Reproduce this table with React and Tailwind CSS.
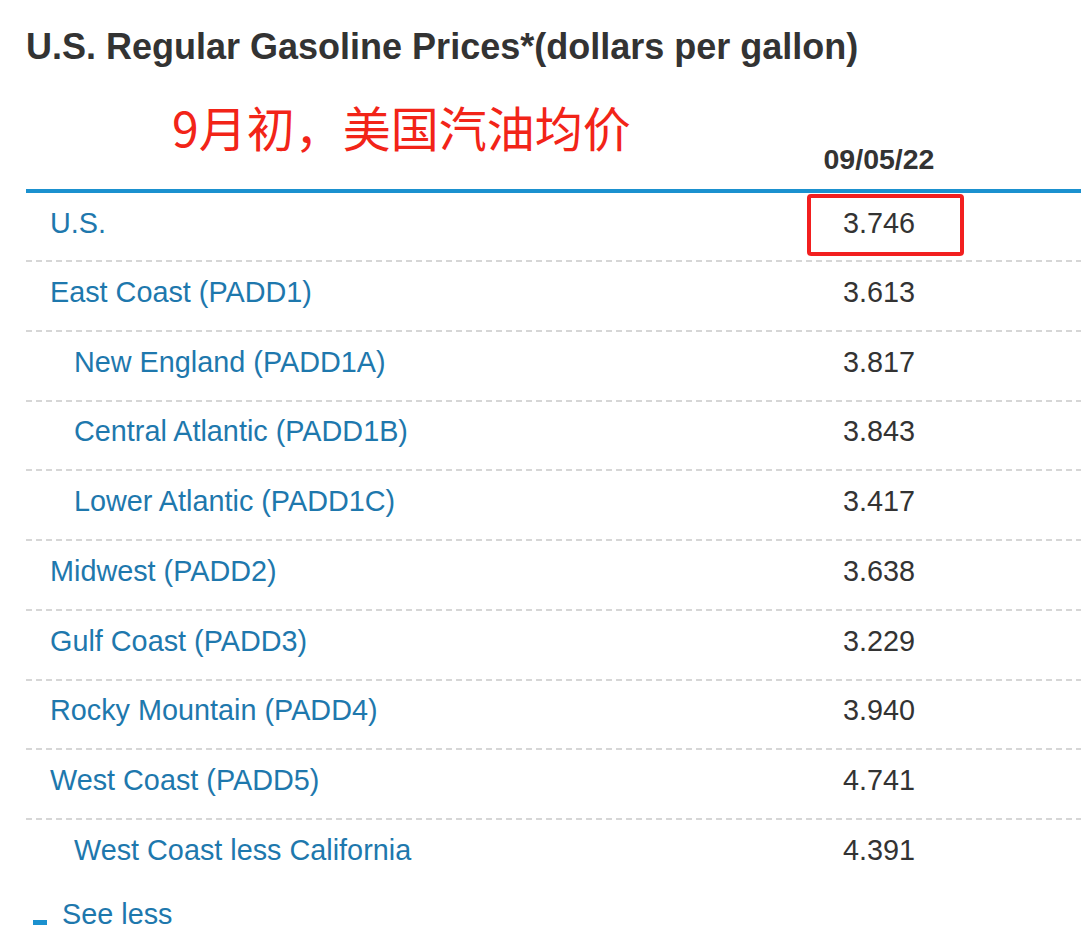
import React from "react";

const rows = [
  { label: "U.S.", value: "3.746", indent: false, boxed: true },
  { label: "East Coast (PADD1)", value: "3.613", indent: false },
  { label: "New England (PADD1A)", value: "3.817", indent: true },
  { label: "Central Atlantic (PADD1B)", value: "3.843", indent: true },
  { label: "Lower Atlantic (PADD1C)", value: "3.417", indent: true },
  { label: "Midwest (PADD2)", value: "3.638", indent: false },
  { label: "Gulf Coast (PADD3)", value: "3.229", indent: false },
  { label: "Rocky Mountain (PADD4)", value: "3.940", indent: false },
  { label: "West Coast (PADD5)", value: "4.741", indent: false },
  { label: "West Coast less California", value: "4.391", indent: true },
];

function Separator() {
  return (
    <div className="h-[2px] w-full bg-[linear-gradient(to_right,#d6d6d6_6px,transparent_6px)] bg-[length:10px_2px] bg-repeat-x" />
  );
}

export default function App() {
  return (
    <div className="w-[1081px] h-[949px] bg-white overflow-hidden font-['Liberation_Sans',Arial,sans-serif]">
      <div className="pl-[26px]">
        <h1 className="mt-[27px] text-[36px] leading-[40px] font-bold text-[#333333] whitespace-nowrap">
          U.S. Regular Gasoline Prices*(dollars per gallon)
        </h1>
        <div className="mt-[31px] ml-[146px] text-[48px] leading-[56px] text-[#f22418] whitespace-nowrap font-['Noto_Sans_CJK_SC','Microsoft_YaHei',sans-serif]">
          9月初，美国汽油均价
        </div>
        <div className="-mt-[11px] flex justify-end">
          <div className="w-[404px] text-center text-[28.5px] leading-[32px] font-bold text-[#333333] mb-[14px]">
            09/05/22
          </div>
        </div>
        <div className="border-t-4 border-[#1b91cf]">
          {rows.map((r, i) => (
            <div key={r.label}>
              {i > 0 && <Separator />}
              <div
                className={
                  "relative flex items-center pb-[8px] text-[28.8px] leading-[32px] " +
                  (i === 0 ? "h-[67px]" : "h-[67.75px]")
                }
              >
                <div
                  className={
                    "flex-1 text-[#1e78ad] whitespace-nowrap " +
                    (r.indent ? "pl-[48px]" : "pl-[24px]")
                  }
                >
                  {r.label}
                </div>
                <div className="w-[404px] text-center text-[#333333]">{r.value}</div>
                {r.boxed && (
                  <div className="absolute left-[781px] top-[1px] w-[157px] h-[62px] border-4 border-[#f21f1f] rounded-[4px]" />
                )}
              </div>
            </div>
          ))}
        </div>
        <div className="mt-[10px] flex items-start">
          <div className="ml-[7px] mt-[22px] w-[14px] h-[5px] bg-[#1b91cf]" />
          <div className="ml-[15px] text-[28.8px] leading-[32px] text-[#1e78ad]">See less</div>
        </div>
      </div>
    </div>
  );
}
